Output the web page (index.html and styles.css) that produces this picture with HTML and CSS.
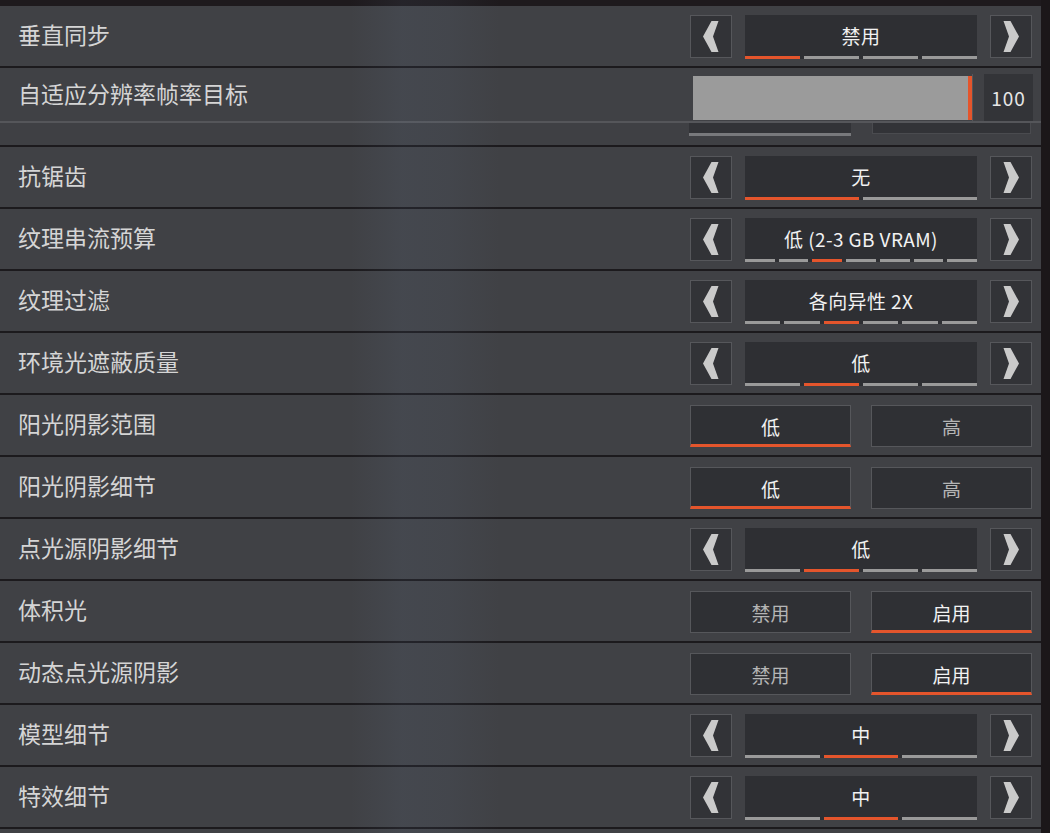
FILE: index.html
```html
<!DOCTYPE HTML>
<html>

	<head>
		<meta http-equiv="Content-Type" content="text/html; charset=utf-8">
		<link rel="stylesheet" href="styles.css">
	</head>

	<body>
		<div class="panel">
			<div class="row">
				<div class="label">垂直同步</div>
				<div class="picker">
					<div class="arrow"><svg width="16" height="31" viewBox="0 0 16 31"><polygon points="8.5,0 15.5,0 10,15.5 15.5,31 8.5,31 0,15.5"/></svg></div>
					<div class="value">
						<div class="value-text">禁用</div>
						<div class="segs"><i class="on"></i><i></i><i></i><i></i></div>
					</div>
					<div class="arrow"><svg width="16" height="31" viewBox="0 0 16 31"><polygon points="0.5,0 7.5,0 16,15.5 7.5,31 0.5,31 6,15.5"/></svg></div>
				</div>
			</div>

			<div class="row row-slider">
				<div class="label">自适应分辨率帧率目标</div>
				<div class="slider">
					<div class="track"><span class="thumb"></span></div>
					<div class="tick"></div>
					<div class="num">100</div>
				</div>
			</div>
			<div class="strip">
				<div class="stub stub-on"></div>
				<div class="stub"></div>
			</div>

			<div class="row">
				<div class="label">抗锯齿</div>
				<div class="picker">
					<div class="arrow"><svg width="16" height="31" viewBox="0 0 16 31"><polygon points="8.5,0 15.5,0 10,15.5 15.5,31 8.5,31 0,15.5"/></svg></div>
					<div class="value">
						<div class="value-text">无</div>
						<div class="segs"><i class="on"></i><i></i></div>
					</div>
					<div class="arrow"><svg width="16" height="31" viewBox="0 0 16 31"><polygon points="0.5,0 7.5,0 16,15.5 7.5,31 0.5,31 6,15.5"/></svg></div>
				</div>
			</div>

			<div class="row">
				<div class="label">纹理串流预算</div>
				<div class="picker">
					<div class="arrow"><svg width="16" height="31" viewBox="0 0 16 31"><polygon points="8.5,0 15.5,0 10,15.5 15.5,31 8.5,31 0,15.5"/></svg></div>
					<div class="value">
						<div class="value-text">低 (2-3 GB VRAM)</div>
						<div class="segs"><i></i><i></i><i class="on"></i><i></i><i></i><i></i><i></i></div>
					</div>
					<div class="arrow"><svg width="16" height="31" viewBox="0 0 16 31"><polygon points="0.5,0 7.5,0 16,15.5 7.5,31 0.5,31 6,15.5"/></svg></div>
				</div>
			</div>

			<div class="row">
				<div class="label">纹理过滤</div>
				<div class="picker">
					<div class="arrow"><svg width="16" height="31" viewBox="0 0 16 31"><polygon points="8.5,0 15.5,0 10,15.5 15.5,31 8.5,31 0,15.5"/></svg></div>
					<div class="value">
						<div class="value-text">各向异性 2X</div>
						<div class="segs"><i></i><i></i><i class="on"></i><i></i><i></i><i></i></div>
					</div>
					<div class="arrow"><svg width="16" height="31" viewBox="0 0 16 31"><polygon points="0.5,0 7.5,0 16,15.5 7.5,31 0.5,31 6,15.5"/></svg></div>
				</div>
			</div>

			<div class="row">
				<div class="label">环境光遮蔽质量</div>
				<div class="picker">
					<div class="arrow"><svg width="16" height="31" viewBox="0 0 16 31"><polygon points="8.5,0 15.5,0 10,15.5 15.5,31 8.5,31 0,15.5"/></svg></div>
					<div class="value">
						<div class="value-text">低</div>
						<div class="segs"><i></i><i class="on"></i><i></i><i></i></div>
					</div>
					<div class="arrow"><svg width="16" height="31" viewBox="0 0 16 31"><polygon points="0.5,0 7.5,0 16,15.5 7.5,31 0.5,31 6,15.5"/></svg></div>
				</div>
			</div>

			<div class="row">
				<div class="label">阳光阴影范围</div>
				<div class="toggle">
					<div class="opt opt-on">低</div>
					<div class="opt">高</div>
				</div>
			</div>

			<div class="row">
				<div class="label">阳光阴影细节</div>
				<div class="toggle">
					<div class="opt opt-on">低</div>
					<div class="opt">高</div>
				</div>
			</div>

			<div class="row">
				<div class="label">点光源阴影细节</div>
				<div class="picker">
					<div class="arrow"><svg width="16" height="31" viewBox="0 0 16 31"><polygon points="8.5,0 15.5,0 10,15.5 15.5,31 8.5,31 0,15.5"/></svg></div>
					<div class="value">
						<div class="value-text">低</div>
						<div class="segs"><i></i><i class="on"></i><i></i><i></i></div>
					</div>
					<div class="arrow"><svg width="16" height="31" viewBox="0 0 16 31"><polygon points="0.5,0 7.5,0 16,15.5 7.5,31 0.5,31 6,15.5"/></svg></div>
				</div>
			</div>

			<div class="row">
				<div class="label">体积光</div>
				<div class="toggle">
					<div class="opt">禁用</div>
					<div class="opt opt-on">启用</div>
				</div>
			</div>

			<div class="row">
				<div class="label">动态点光源阴影</div>
				<div class="toggle">
					<div class="opt">禁用</div>
					<div class="opt opt-on">启用</div>
				</div>
			</div>

			<div class="row">
				<div class="label">模型细节</div>
				<div class="picker">
					<div class="arrow"><svg width="16" height="31" viewBox="0 0 16 31"><polygon points="8.5,0 15.5,0 10,15.5 15.5,31 8.5,31 0,15.5"/></svg></div>
					<div class="value">
						<div class="value-text">中</div>
						<div class="segs"><i></i><i class="on"></i><i></i></div>
					</div>
					<div class="arrow"><svg width="16" height="31" viewBox="0 0 16 31"><polygon points="0.5,0 7.5,0 16,15.5 7.5,31 0.5,31 6,15.5"/></svg></div>
				</div>
			</div>

			<div class="row">
				<div class="label">特效细节</div>
				<div class="picker">
					<div class="arrow"><svg width="16" height="31" viewBox="0 0 16 31"><polygon points="8.5,0 15.5,0 10,15.5 15.5,31 8.5,31 0,15.5"/></svg></div>
					<div class="value">
						<div class="value-text">中</div>
						<div class="segs"><i></i><i class="on"></i><i></i></div>
					</div>
					<div class="arrow"><svg width="16" height="31" viewBox="0 0 16 31"><polygon points="0.5,0 7.5,0 16,15.5 7.5,31 0.5,31 6,15.5"/></svg></div>
				</div>
			</div>

			<div class="row row-cut"></div>
		</div>
	</body>

</html>
```

FILE: styles.css
```css
* {
	margin: 0;
	padding: 0;
	box-sizing: border-box;
}

body {
	background: #1b1719;
	font-family: "Noto Sans CJK SC", "Noto Sans", sans-serif;
	overflow: hidden;
}

.panel {
	width: 1041px;
	padding-top: 6px;
	position: relative;
	background: #1e1a1d;
}

/* blue glare from the game scene behind the menu */
.panel:after {
	content: "";
	position: absolute;
	top: 0;
	bottom: 0;
	left: 350px;
	width: 150px;
	background: linear-gradient(90deg, rgba(120, 150, 190, 0) 0%, rgba(120, 150, 190, 0.08) 35%, rgba(120, 150, 190, 0.06) 65%, rgba(120, 150, 190, 0) 100%);
	pointer-events: none;
}

.row {
	display: flex;
	align-items: center;
	height: 62px;
	padding: 2px 9px 0 18px;
	background: #404145;
	border-bottom: 2px solid #1c1a1d;
}

.label {
	flex: 1;
	font-size: 23px;
	color: #d5d5d5;
	line-height: 1;
	padding-bottom: 5px;
}

/* arrow picker */
.picker {
	display: flex;
	align-items: flex-start;
	gap: 13px;
	width: 342px;
}

.arrow {
	width: 42px;
	height: 43px;
	border: 1px solid #56575b;
	background: #323337;
	display: flex;
	align-items: center;
	justify-content: center;
}

.arrow svg {
	fill: #cacaca;
}

.value {
	width: 232px;
	height: 44px;
	background: #2e2f33;
	display: flex;
	flex-direction: column;
}

.value-text {
	flex: 1;
	display: flex;
	align-items: center;
	justify-content: center;
	font-size: 19px;
	color: #f2f2f2;
	letter-spacing: 0.4px;
}

.segs {
	display: flex;
	gap: 4px;
	height: 3px;
}

.segs i {
	flex: 1;
	background: #9a9a9a;
}

.segs i.on {
	background: #e4552c;
}

/* two option toggle */
.toggle {
	display: flex;
	gap: 20px;
	width: 342px;
}

.opt {
	width: 161px;
	height: 42px;
	border: 1px solid #56575b;
	background: #2f3034;
	display: flex;
	align-items: center;
	justify-content: center;
	font-size: 19px;
	color: #b5b5b5;
}

.opt-on {
	color: #f2f2f2;
	border-bottom: 3px solid #e4552c;
	padding-top: 2px;
}

/* slider row */
.row-slider {
	height: 55px;
	border-bottom: 2px solid #55565a;
	padding: 6px 8px 0 18px;
}

.row-slider .label {
	padding-bottom: 8px;
}

.slider {
	display: flex;
	align-items: center;
	height: 100%;
}

.track {
	width: 279px;
	height: 44px;
	background: #9b9b9b;
	display: flex;
	justify-content: flex-end;
}

.thumb {
	width: 4px;
	background: #e4552c;
}

.tick {
	width: 1px;
	height: 100%;
	background: #56575a;
	margin-right: 11px;
}

.num {
	width: 49px;
	height: 47px;
	background: #333438;
	display: flex;
	align-items: center;
	justify-content: center;
	font-size: 19px;
	color: #e6e6e6;
	letter-spacing: 1px;
}

.strip {
	display: flex;
	gap: 21px;
	height: 24px;
	padding: 0 10px 0 689px;
	background: #3f4044;
	border-bottom: 2px solid #1c1a1d;
	align-items: flex-start;
}

.stub {
	width: 160px;
	height: 11px;
	background: #323337;
	border: 1px solid #4a4b4f;
	border-top: 0;
}

.stub-on {
	width: 162px;
	height: 13px;
	border: 0;
	border-bottom: 3px solid #78797c;
}

.row-cut {
	height: 10px;
	border-bottom: 0;
}
```
